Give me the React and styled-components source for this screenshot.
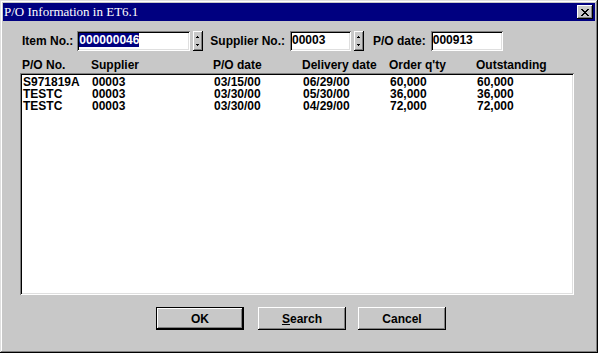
import React from "react";
import styled, { createGlobalStyle } from "styled-components";

const Global = createGlobalStyle`
  html, body { margin: 0; padding: 0; background: #c8c8c8; }
  body { font-family: "Liberation Sans", Arial, sans-serif; }
`;

const GRAY = "#c8c8c8";

const Window = styled.div`
  box-sizing: border-box;
  width: 598px;
  height: 353px;
  background: ${GRAY};
  padding: 3px;
  display: flex;
  flex-direction: column;
  box-shadow: inset -1px -1px #000, inset 1px 1px #dfdfdf, inset -2px -2px #808080,
    inset 2px 2px #fff;
`;

const TitleBar = styled.div`
  height: 18px;
  background: #000080;
  display: flex;
  align-items: center;
  justify-content: space-between;
  padding: 0 2px 0 1px;
`;

const Title = styled.span`
  color: #fff;
  font-family: "Liberation Serif", "Times New Roman", serif;
  font-size: 13px;
  line-height: 18px;
`;

const CloseBtn = styled.div`
  box-sizing: border-box;
  width: 16px;
  height: 14px;
  background: ${GRAY};
  display: flex;
  align-items: center;
  justify-content: center;
  box-shadow: inset -1px -1px #000, inset 1px 1px #fff, inset -2px -2px #808080;
`;

const Content = styled.div`
  flex: 1;
  display: flex;
  flex-direction: column;
  padding: 10px 0 0 17px;
`;

const FormRow = styled.div`
  display: flex;
  align-items: center;
  height: 20px;
  padding-left: 2px;
`;

const Label = styled.span`
  font-weight: bold;
  font-size: 12px;
  color: #000;
  margin-left: ${(p) => p.$ml || 0}px;
  margin-right: ${(p) => p.$mr || 4}px;
  white-space: nowrap;
`;

const Field = styled.div`
  box-sizing: border-box;
  width: ${(p) => p.$w}px;
  height: 20px;
  background: #fff;
  padding: 2px 0 0 2px;
  font-weight: bold;
  font-size: 12px;
  line-height: 15px;
  box-shadow: inset 1px 1px #808080, inset -1px -1px #fff, inset 2px 2px #000,
    inset -2px -2px #dfdfdf;
`;

const Selected = styled.span`
  background: #000080;
  color: #fff;
`;

const Spinner = styled.div`
  box-sizing: border-box;
  width: 10px;
  height: 20px;
  margin-left: 3px;
  background: ${GRAY};
  display: flex;
  align-items: center;
  justify-content: center;
  box-shadow: inset -1px -1px #000, inset 1px 1px #fff, inset -2px -2px #808080;
`;

const Columns = styled.div`
  display: grid;
  grid-template-columns: 69px 122px 89px 87px 87px 1fr;
  font-weight: bold;
  font-size: 12px;
  line-height: 12px;
  height: 12px;
  color: #000;
  white-space: nowrap;
`;

const HeaderRow = styled(Columns)`
  margin-top: 8px;
  padding-left: 2px;
  height: 13px;
  line-height: 13px;
`;

const ListBox = styled.div`
  box-sizing: border-box;
  width: 554px;
  height: 222px;
  margin-top: 1px;
  background: #fff;
  padding: 3px 0 0 3px;
  box-shadow: inset 1px 1px #808080, inset -1px -1px #fff, inset 2px 2px #000,
    inset -2px -2px #dfdfdf;
`;

const ButtonRow = styled.div`
  display: flex;
  margin-top: 12px;
  padding-left: 136px;
`;

const Button = styled.div`
  box-sizing: border-box;
  width: 88px;
  height: 23px;
  margin-left: ${(p) => p.$ml || 0}px;
  background: ${GRAY};
  display: flex;
  align-items: center;
  justify-content: center;
  font-weight: bold;
  font-size: 12px;
  color: #000;
  box-shadow: ${(p) =>
    p.$default
      ? "inset 0 0 0 1px #000, inset -2px -2px #000, inset 2px 2px #fff, inset -3px -3px #808080"
      : "inset -1px -1px #000, inset 1px 1px #fff, inset -2px -2px #808080"};
`;

const U = styled.span`
  text-decoration: underline;
`;

const SpinIcon = () => (
  <svg width="4" height="12" viewBox="0 0 4 12" shapeRendering="crispEdges">
    <rect x="1" y="1" width="1" height="1" fill="#000" />
    <rect x="0" y="2" width="3" height="1" fill="#000" />
    <rect x="0" y="9" width="3" height="1" fill="#000" />
    <rect x="1" y="10" width="1" height="1" fill="#000" />
  </svg>
);

const XIcon = () => (
  <svg width="8" height="7" viewBox="0 0 8 7" shapeRendering="crispEdges">
    <path d="M0 0h2v1h1v1h2V1h1V0h2v1H7v1H6v1H5v1h1v1h1v1h1v1H6V6H5V5H3v1H2v1H0V6h1V5h1V4h1V3H2V2H1V1H0z" fill="#000" />
  </svg>
);

const rows = [
  ["S971819A", "00003", "03/15/00", "06/29/00", "60,000", "60,000"],
  ["TESTC", "00003", "03/30/00", "05/30/00", "36,000", "36,000"],
  ["TESTC", "00003", "03/30/00", "04/29/00", "72,000", "72,000"],
];

const headers = ["P/O No.", "Supplier", "P/O date", "Delivery date", "Order q'ty", "Outstanding"];

export default function App() {
  return (
    <>
      <Global />
      <Window>
        <TitleBar>
          <Title>P/O Information in ET6.1</Title>
          <CloseBtn>
            <XIcon />
          </CloseBtn>
        </TitleBar>
        <Content>
          <FormRow>
            <Label>Item No.:</Label>
            <Field $w={113}>
              <Selected>000000046</Selected>
            </Field>
            <Spinner>
              <SpinIcon />
            </Spinner>
            <Label $ml={7} $mr={5}>Supplier No.:</Label>
            <Field $w={61}>00003</Field>
            <Spinner>
              <SpinIcon />
            </Spinner>
            <Label $ml={9} $mr={5}>P/O date:</Label>
            <Field $w={72}>000913</Field>
          </FormRow>
          <HeaderRow>
            {headers.map((h) => (
              <span key={h}>{h}</span>
            ))}
          </HeaderRow>
          <ListBox>
            {rows.map((r, i) => (
              <Columns key={i}>
                {r.map((c, j) => (
                  <span key={j}>{c}</span>
                ))}
              </Columns>
            ))}
          </ListBox>
          <ButtonRow>
            <Button $default>OK</Button>
            <Button $ml={14}>
              <U>S</U>earch
            </Button>
            <Button $ml={12}>Cancel</Button>
          </ButtonRow>
        </Content>
      </Window>
    </>
  );
}
